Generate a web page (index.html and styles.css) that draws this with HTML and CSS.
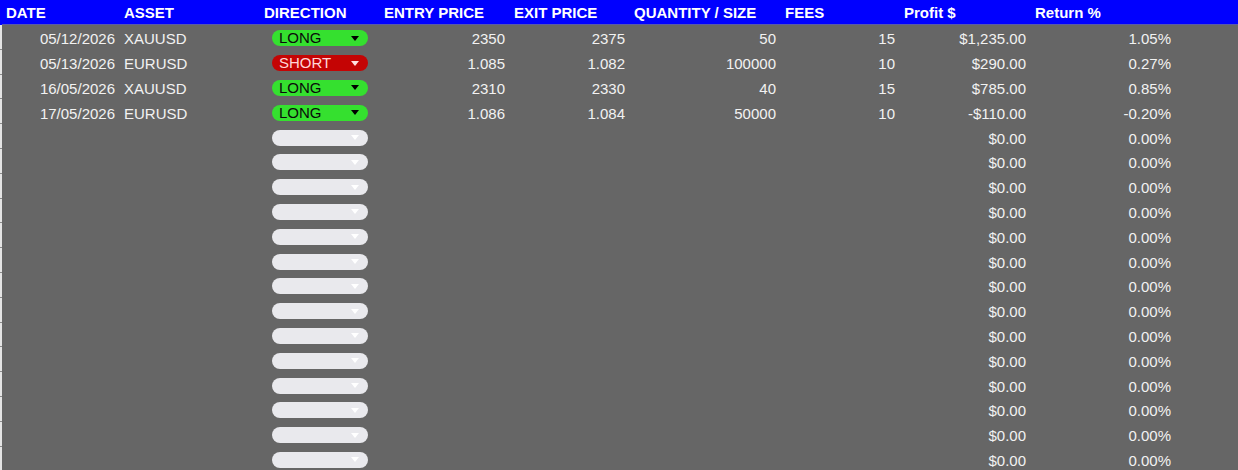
FILE: index.html
```html
<!DOCTYPE html>
<html>
<head>
<meta charset="utf-8">
<link rel="stylesheet" href="styles.css">
</head>
<body>
<div class="sheet">
  <div class="row head">
    <div class="g"></div>
    <div class="c">DATE</div>
    <div class="c">ASSET</div>
    <div class="c">DIRECTION</div>
    <div class="c">ENTRY PRICE</div>
    <div class="c">EXIT PRICE</div>
    <div class="c">QUANTITY / SIZE</div>
    <div class="c">FEES</div>
    <div class="c">Profit $</div>
    <div class="c">Return %</div>
    <div class="c"></div>
  </div>

  <div class="row">
    <div class="g"></div>
    <div class="c r">05/12/2026</div>
    <div class="c">XAUUSD</div>
    <div class="c mid"><div class="chip long"><span>LONG</span><svg width="8" height="5" viewBox="0 0 8 5"><path d="M0 0H8L4 5Z"/></svg></div></div>
    <div class="c r">2350</div>
    <div class="c r">2375</div>
    <div class="c r">50</div>
    <div class="c r">15</div>
    <div class="c r">$1,235.00</div>
    <div class="c r">1.05%</div>
    <div class="c"></div>
  </div>
  <div class="row">
    <div class="g"></div>
    <div class="c r">05/13/2026</div>
    <div class="c">EURUSD</div>
    <div class="c mid"><div class="chip short"><span>SHORT</span><svg width="8" height="5" viewBox="0 0 8 5"><path d="M0 0H8L4 5Z"/></svg></div></div>
    <div class="c r">1.085</div>
    <div class="c r">1.082</div>
    <div class="c r">100000</div>
    <div class="c r">10</div>
    <div class="c r">$290.00</div>
    <div class="c r">0.27%</div>
    <div class="c"></div>
  </div>
  <div class="row">
    <div class="g"></div>
    <div class="c r">16/05/2026</div>
    <div class="c">XAUUSD</div>
    <div class="c mid"><div class="chip long"><span>LONG</span><svg width="8" height="5" viewBox="0 0 8 5"><path d="M0 0H8L4 5Z"/></svg></div></div>
    <div class="c r">2310</div>
    <div class="c r">2330</div>
    <div class="c r">40</div>
    <div class="c r">15</div>
    <div class="c r">$785.00</div>
    <div class="c r">0.85%</div>
    <div class="c"></div>
  </div>
  <div class="row">
    <div class="g"></div>
    <div class="c r">17/05/2026</div>
    <div class="c">EURUSD</div>
    <div class="c mid"><div class="chip long"><span>LONG</span><svg width="8" height="5" viewBox="0 0 8 5"><path d="M0 0H8L4 5Z"/></svg></div></div>
    <div class="c r">1.086</div>
    <div class="c r">1.084</div>
    <div class="c r">50000</div>
    <div class="c r">10</div>
    <div class="c r">-$110.00</div>
    <div class="c r">-0.20%</div>
    <div class="c"></div>
  </div>

  <div class="row"><div class="g"></div><div class="c"></div><div class="c"></div><div class="c mid"><div class="chip empty"><span></span><svg width="8" height="5" viewBox="0 0 8 5"><path d="M0 0H8L4 5Z"/></svg></div></div><div class="c"></div><div class="c"></div><div class="c"></div><div class="c"></div><div class="c r">$0.00</div><div class="c r">0.00%</div><div class="c"></div></div>
  <div class="row"><div class="g"></div><div class="c"></div><div class="c"></div><div class="c mid"><div class="chip empty"><span></span><svg width="8" height="5" viewBox="0 0 8 5"><path d="M0 0H8L4 5Z"/></svg></div></div><div class="c"></div><div class="c"></div><div class="c"></div><div class="c"></div><div class="c r">$0.00</div><div class="c r">0.00%</div><div class="c"></div></div>
  <div class="row"><div class="g"></div><div class="c"></div><div class="c"></div><div class="c mid"><div class="chip empty"><span></span><svg width="8" height="5" viewBox="0 0 8 5"><path d="M0 0H8L4 5Z"/></svg></div></div><div class="c"></div><div class="c"></div><div class="c"></div><div class="c"></div><div class="c r">$0.00</div><div class="c r">0.00%</div><div class="c"></div></div>
  <div class="row"><div class="g"></div><div class="c"></div><div class="c"></div><div class="c mid"><div class="chip empty"><span></span><svg width="8" height="5" viewBox="0 0 8 5"><path d="M0 0H8L4 5Z"/></svg></div></div><div class="c"></div><div class="c"></div><div class="c"></div><div class="c"></div><div class="c r">$0.00</div><div class="c r">0.00%</div><div class="c"></div></div>
  <div class="row"><div class="g"></div><div class="c"></div><div class="c"></div><div class="c mid"><div class="chip empty"><span></span><svg width="8" height="5" viewBox="0 0 8 5"><path d="M0 0H8L4 5Z"/></svg></div></div><div class="c"></div><div class="c"></div><div class="c"></div><div class="c"></div><div class="c r">$0.00</div><div class="c r">0.00%</div><div class="c"></div></div>
  <div class="row"><div class="g"></div><div class="c"></div><div class="c"></div><div class="c mid"><div class="chip empty"><span></span><svg width="8" height="5" viewBox="0 0 8 5"><path d="M0 0H8L4 5Z"/></svg></div></div><div class="c"></div><div class="c"></div><div class="c"></div><div class="c"></div><div class="c r">$0.00</div><div class="c r">0.00%</div><div class="c"></div></div>
  <div class="row"><div class="g"></div><div class="c"></div><div class="c"></div><div class="c mid"><div class="chip empty"><span></span><svg width="8" height="5" viewBox="0 0 8 5"><path d="M0 0H8L4 5Z"/></svg></div></div><div class="c"></div><div class="c"></div><div class="c"></div><div class="c"></div><div class="c r">$0.00</div><div class="c r">0.00%</div><div class="c"></div></div>
  <div class="row"><div class="g"></div><div class="c"></div><div class="c"></div><div class="c mid"><div class="chip empty"><span></span><svg width="8" height="5" viewBox="0 0 8 5"><path d="M0 0H8L4 5Z"/></svg></div></div><div class="c"></div><div class="c"></div><div class="c"></div><div class="c"></div><div class="c r">$0.00</div><div class="c r">0.00%</div><div class="c"></div></div>
  <div class="row"><div class="g"></div><div class="c"></div><div class="c"></div><div class="c mid"><div class="chip empty"><span></span><svg width="8" height="5" viewBox="0 0 8 5"><path d="M0 0H8L4 5Z"/></svg></div></div><div class="c"></div><div class="c"></div><div class="c"></div><div class="c"></div><div class="c r">$0.00</div><div class="c r">0.00%</div><div class="c"></div></div>
  <div class="row"><div class="g"></div><div class="c"></div><div class="c"></div><div class="c mid"><div class="chip empty"><span></span><svg width="8" height="5" viewBox="0 0 8 5"><path d="M0 0H8L4 5Z"/></svg></div></div><div class="c"></div><div class="c"></div><div class="c"></div><div class="c"></div><div class="c r">$0.00</div><div class="c r">0.00%</div><div class="c"></div></div>
  <div class="row"><div class="g"></div><div class="c"></div><div class="c"></div><div class="c mid"><div class="chip empty"><span></span><svg width="8" height="5" viewBox="0 0 8 5"><path d="M0 0H8L4 5Z"/></svg></div></div><div class="c"></div><div class="c"></div><div class="c"></div><div class="c"></div><div class="c r">$0.00</div><div class="c r">0.00%</div><div class="c"></div></div>
  <div class="row"><div class="g"></div><div class="c"></div><div class="c"></div><div class="c mid"><div class="chip empty"><span></span><svg width="8" height="5" viewBox="0 0 8 5"><path d="M0 0H8L4 5Z"/></svg></div></div><div class="c"></div><div class="c"></div><div class="c"></div><div class="c"></div><div class="c r">$0.00</div><div class="c r">0.00%</div><div class="c"></div></div>
  <div class="row"><div class="g"></div><div class="c"></div><div class="c"></div><div class="c mid"><div class="chip empty"><span></span><svg width="8" height="5" viewBox="0 0 8 5"><path d="M0 0H8L4 5Z"/></svg></div></div><div class="c"></div><div class="c"></div><div class="c"></div><div class="c"></div><div class="c r">$0.00</div><div class="c r">0.00%</div><div class="c"></div></div>
  <div class="row"><div class="g"></div><div class="c"></div><div class="c"></div><div class="c mid"><div class="chip empty"><span></span><svg width="8" height="5" viewBox="0 0 8 5"><path d="M0 0H8L4 5Z"/></svg></div></div><div class="c"></div><div class="c"></div><div class="c"></div><div class="c"></div><div class="c r">$0.00</div><div class="c r">0.00%</div><div class="c"></div></div>
</div>
</body>
</html>
```
FILE: styles.css
```css
html, body {
  margin: 0;
  padding: 0;
  background: #666666;
  overflow: hidden;
}
.sheet {
  font-family: "Liberation Sans", Arial, sans-serif;
  font-size: 15px;
  color: #f2f2f2;
  width: 1238px;
}
.row {
  display: grid;
  grid-template-columns: 2px 118px 140px 120px 130px 120px 151px 119px 131px 145px 1fr;
  height: 24.8px;
  align-items: center;
}
.row.head {
  height: 25px;
  background: #0000ff;
  color: #ffffff;
  font-weight: bold;
  border-bottom: 1px solid #5a5aa8;
  box-sizing: border-box;
}
.g {
  align-self: stretch;
  background: #e4e4e4;
  border-bottom: 1px solid #8a8a8a;
  box-sizing: border-box;
}
.head .g {
  background: #0000ff;
  border: none;
}
.c {
  padding: 4px 5px 0 4px;
  white-space: nowrap;
  line-height: 18px;
}
.head .c {
  line-height: 24px;
  padding-top: 1px;
}
.c.r {
  text-align: right;
}
.c.mid {
  display: flex;
  justify-content: center;
  padding: 2px 0 0 0;
}
.chip {
  width: 96px;
  height: 16px;
  border-radius: 8px;
  box-sizing: border-box;
  padding: 0 9px 0 7px;
  display: flex;
  align-items: center;
  justify-content: space-between;
  line-height: 16px;
  font-size: 15px;
}
.chip svg {
  display: block;
  flex: none;
}
.chip.long {
  background: #35e02f;
  color: #0a0a0a;
}
.chip.long svg path {
  fill: #000000;
}
.chip.short {
  background: #c40404;
  color: #ffd6d6;
}
.chip.short svg path {
  fill: #ffe0e0;
}
.chip.empty {
  background: #e9e9ed;
}
.chip.empty svg path {
  fill: #ffffff;
}
```
